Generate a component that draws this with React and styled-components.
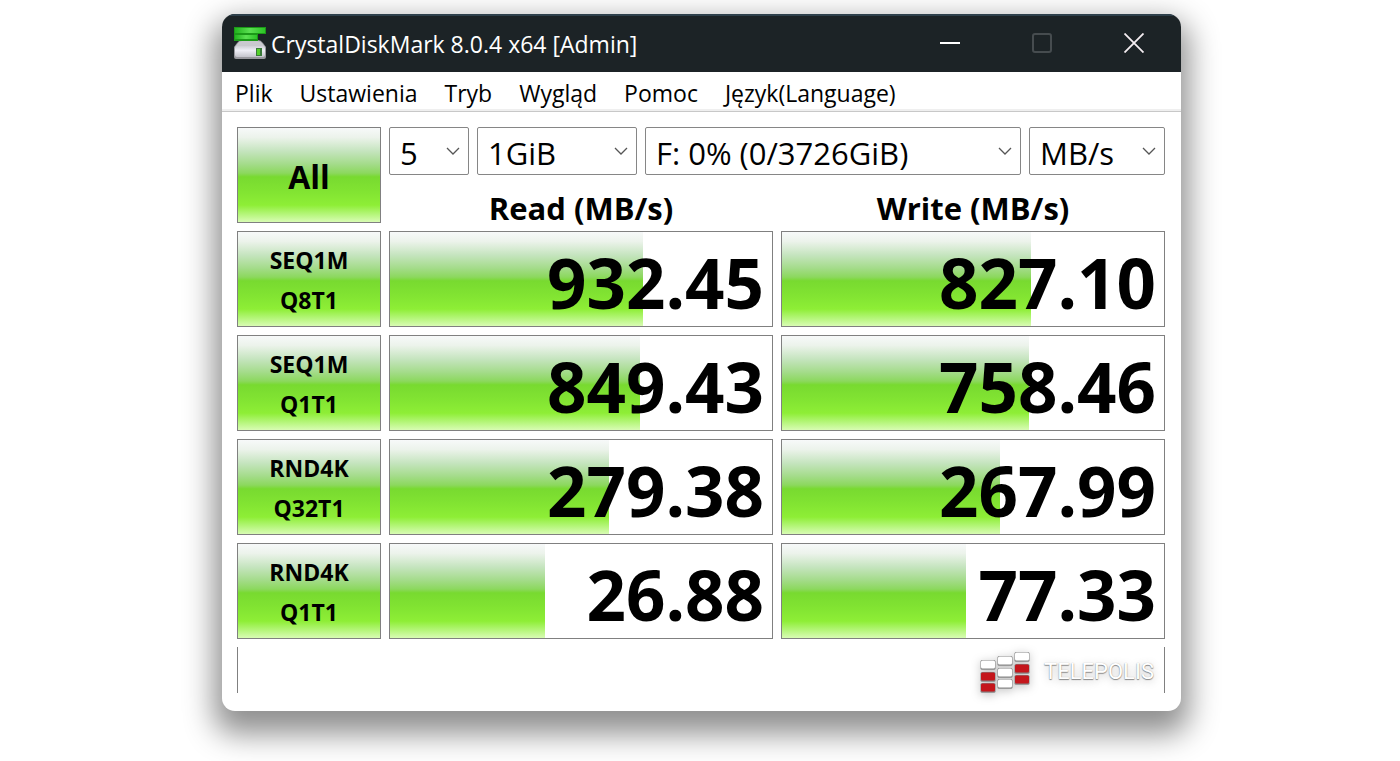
import React from "react";
import styled, { createGlobalStyle } from "styled-components";

const GlobalStyle = createGlobalStyle`
  * {
    box-sizing: border-box;
  }

  body {
    margin: 0;
    background: #fff;
    color: #000;
    font-family: "Open Sans", "Noto Sans", sans-serif;
  }

  button,
  select {
    font: inherit;
    color: inherit;
  }
`;

const Page = styled.div`
  padding: 14px 21px 50px 24px;
`;

const AppWindow = styled.main`
  max-width: 959px;
  margin: 0 auto;
  border-radius: 13px;
  overflow: hidden;
  background: #fff;
  box-shadow: 0 15px 30px 8px rgba(0, 0, 0, 0.44);
`;

const TitleBar = styled.header`
  display: flex;
  align-items: center;
  height: 58px;
  padding: 0 1px 2px 12px;
  border-top: 2px solid #2e404b;
  background: #1c2326;
  color: #fff;
`;

const Title = styled.h1`
  flex: 1;
  margin: 0 0 0 5px;
  font-size: 23px;
  font-weight: 400;
  line-height: 32px;
  padding-top: 2px;
  white-space: nowrap;
`;

const WindowButton = styled.button`
  display: flex;
  align-items: center;
  justify-content: center;
  width: 92px;
  height: 54px;
  padding: 0;
  border: 0;
  background: none;
`;

const MenuBar = styled.nav`
  display: flex;
  gap: 27px;
  height: 40px;
  padding: 5px 13px 0;
  border-bottom: 1px solid #c8c8c8;
  box-shadow: inset 0 -2px 0 #efefef;
`;

const MenuItem = styled.button`
  padding: 0;
  border: 0;
  background: none;
  font-size: 23px;
  line-height: 32px;
  height: 32px;
  white-space: nowrap;
`;

const Content = styled.div`
  padding: 7px 8px 18px 7px;
`;

const ResultTable = styled.table`
  width: 100%;
  table-layout: fixed;
  border-collapse: separate;
  border-spacing: 8px;

  th,
  td {
    padding: 0;
  }
`;

const glossy = `linear-gradient(
  #f7f9f9 0%,
  #ecf3eb 10%,
  #c4e4bd 25%,
  #a5dc8c 38%,
  #8cd85e 48%,
  #78da30 52%,
  #82e432 68%,
  #8eee36 82%,
  #b6f67c 92%,
  #d8fcb4 100%
)`;

const TestButton = styled.button`
  display: block;
  width: 100%;
  height: 96px;
  padding: ${(props) => (props.$large ? "4px 0 0" : "2px 0 0")};
  border: 1px solid #808080;
  background: ${glossy};
  font-size: ${(props) => (props.$large ? "32px" : "23px")};
  font-weight: 700;
  line-height: 40px;
`;

const Line = styled.span`
  display: block;
`;

const Options = styled.div`
  display: grid;
  grid-template-columns: 80px 160px 1fr 136px;
  gap: 8px;
`;

const SelectBox = styled.div`
  display: grid;
  align-items: center;

  > * {
    grid-area: 1 / 1;
  }

  svg {
    justify-self: end;
    margin-right: 9px;
    pointer-events: none;
  }
`;

const Select = styled.select`
  appearance: none;
  width: 100%;
  height: 48px;
  padding: 4px 30px 0 10px;
  border: 1px solid #868686;
  border-radius: 2px;
  background: #fff;
  font-size: 31px;
  line-height: 42px;
`;

const ColumnTitle = styled.th`
  height: 40px;
  font-size: 31px;
  line-height: 30px;
  vertical-align: bottom;
`;

const Meter = styled.div`
  display: grid;
  height: 96px;
  border: 1px solid #808080;

  > * {
    grid-area: 1 / 1;
  }
`;

const Fill = styled.div`
  background: ${glossy};
`;

const Value = styled.span`
  padding: 6px 8px 0 0;
  font-size: 69px;
  font-weight: 700;
  line-height: 88px;
  text-align: right;
`;

const Footer = styled.footer`
  display: flex;
  align-items: center;
  justify-content: flex-end;
  gap: 14px;
  height: 46px;
  margin: 0 8px;
  padding: 4px 10px 0 0;
  border: solid #808080;
  border-width: 0 1px;
`;

const Brand = styled.span`
  color: #fff;
  font-family: Roboto, sans-serif;
  font-size: 22px;
  line-height: 24px;
  text-shadow: 0 1px 1px #888, 0 0 1px #aaa, 0 2px 8px rgba(0, 0, 0, 0.25);
`;

const LogoSvg = styled.svg`
  overflow: visible;
  filter: drop-shadow(0 2px 5px rgba(0, 0, 0, 0.25));
`;

const menu = ["Plik", "Ustawienia", "Tryb", "Wygląd", "Pomoc", "Język(Language)"];

const options = [
  { label: "Test count", value: "5" },
  { label: "Test size", value: "1GiB" },
  { label: "Drive", value: "F: 0% (0/3726GiB)" },
  { label: "Unit", value: "MB/s" },
];

const results = [
  { test: "SEQ1M", queue: "Q8T1", read: 932.45, write: 827.1 },
  { test: "SEQ1M", queue: "Q1T1", read: 849.43, write: 758.46 },
  { test: "RND4K", queue: "Q32T1", read: 279.38, write: 267.99 },
  { test: "RND4K", queue: "Q1T1", read: 26.88, write: 77.33 },
];

const bricks = [
  [1, 8, "#fff"],
  [1, 20, "#c4161c"],
  [1, 31, "#c4161c"],
  [18, 4, "#fff"],
  [18, 16, "#fff"],
  [18, 27, "#fff"],
  [35, 0, "#fff"],
  [35, 12, "#c4161c"],
  [35, 23, "#c4161c"],
];

// the bars grow on a log scale
const percent = (speed) => (Math.log10(speed * 10) / 6) * 100;

function DiskIcon() {
  return (
    <svg width="32" height="32" viewBox="0 0 32 32" aria-hidden="true">
      <defs>
        <linearGradient id="bar" x1="0" x2="1" y1="0" y2="0">
          <stop offset="0" stopColor="#22b31e" />
          <stop offset="0.5" stopColor="#5ce052" />
          <stop offset="1" stopColor="#2cc426" />
        </linearGradient>
        <linearGradient id="disk" x1="0" x2="0" y1="0" y2="1">
          <stop offset="0" stopColor="#cfcfd6" />
          <stop offset="0.4" stopColor="#eeeef6" />
          <stop offset="1" stopColor="#c4c4cc" />
        </linearGradient>
      </defs>
      <path d="M8 13h16q3 0 5 3l3 4v10q0 2-2 2H2q-2 0-2-2V20l3-4q2-3 5-3z" fill="#98989e" />
      <path d="M8 14h16q3 0 4 2l3 4H1l3-4q1-2 4-2z" fill="#c9c9cf" />
      <rect x="1" y="19" width="30" height="11" rx="2" fill="url(#disk)" />
      <rect x="22" y="21" width="6" height="8" fill="#3a7a3a" />
      <rect x="23" y="22" width="3" height="6" fill="#55d02c" />
      <rect x="0" y="0" width="32" height="7" fill="#1c9a18" />
      <rect x="1" y="1" width="30" height="5" fill="url(#bar)" />
      <rect x="0" y="7" width="24" height="7" fill="#1c9a18" />
      <rect x="1" y="8" width="22" height="4" fill="url(#bar)" />
    </svg>
  );
}

function Logo() {
  return (
    <LogoSvg width="50" height="41" viewBox="0 0 50 41" aria-hidden="true">
      {bricks.map(([x, y, color]) => (
        <g key={`${x}-${y}`}>
          <rect x={x - 0.5} y={y} width="15" height="9.7" rx="1.5" fill="#858585" />
          <rect x={x} y={y + 0.5} width="14" height="8" rx="1.5" fill={color} />
        </g>
      ))}
    </LogoSvg>
  );
}

function Dropdown(props) {
  return (
    <SelectBox>
      <Select aria-label={props.label}>
        <option>{props.value}</option>
      </Select>
      <svg width="14" height="9" viewBox="0 0 14 9" aria-hidden="true">
        <path d="M1 1l6 6 6-6" fill="none" stroke="#555" strokeWidth="1.3" />
      </svg>
    </SelectBox>
  );
}

function Result(props) {
  return (
    <td>
      <Meter>
        <Fill style={{ width: `${percent(props.speed)}%` }} />
        <Value>{props.speed.toFixed(2)}</Value>
      </Meter>
    </td>
  );
}

function App() {
  return (
    <>
      <GlobalStyle />
      <Page>
        <AppWindow>
          <TitleBar>
            <DiskIcon />
            <Title>CrystalDiskMark 8.0.4 x64 [Admin]</Title>
            <WindowButton aria-label="Minimize">
              <svg width="20" height="20" viewBox="0 0 20 20">
                <path d="M0 10h20" stroke="#fff" strokeWidth="2" />
              </svg>
            </WindowButton>
            <WindowButton aria-label="Maximize" disabled>
              <svg width="20" height="20" viewBox="0 0 20 20">
                <rect x="1" y="1" width="18" height="18" rx="2" fill="none" stroke="#464c4f" strokeWidth="2" />
              </svg>
            </WindowButton>
            <WindowButton aria-label="Close">
              <svg width="20" height="20" viewBox="0 0 20 20">
                <path d="M0.5 0.5l19 19M19.5 0.5l-19 19" stroke="#f4eef2" strokeWidth="1.8" />
              </svg>
            </WindowButton>
          </TitleBar>
          <MenuBar>
            {menu.map((item) => (
              <MenuItem key={item}>{item}</MenuItem>
            ))}
          </MenuBar>
          <Content>
            <ResultTable>
              <colgroup>
                <col width="144" />
                <col />
                <col />
              </colgroup>
              <thead>
                <tr>
                  <td rowSpan="2">
                    <TestButton $large>All</TestButton>
                  </td>
                  <td colSpan="2">
                    <Options>
                      {options.map((option) => (
                        <Dropdown key={option.label} label={option.label} value={option.value} />
                      ))}
                    </Options>
                  </td>
                </tr>
                <tr>
                  <ColumnTitle scope="col">Read (MB/s)</ColumnTitle>
                  <ColumnTitle scope="col">Write (MB/s)</ColumnTitle>
                </tr>
              </thead>
              <tbody>
                {results.map((row) => (
                  <tr key={row.test + row.queue}>
                    <th scope="row">
                      <TestButton>
                        <Line>{row.test}</Line>
                        <Line>{row.queue}</Line>
                      </TestButton>
                    </th>
                    <Result speed={row.read} />
                    <Result speed={row.write} />
                  </tr>
                ))}
              </tbody>
            </ResultTable>
            <Footer>
              <Logo />
              <Brand>TELEPOLIS</Brand>
            </Footer>
          </Content>
        </AppWindow>
      </Page>
    </>
  );
}

export default App;
